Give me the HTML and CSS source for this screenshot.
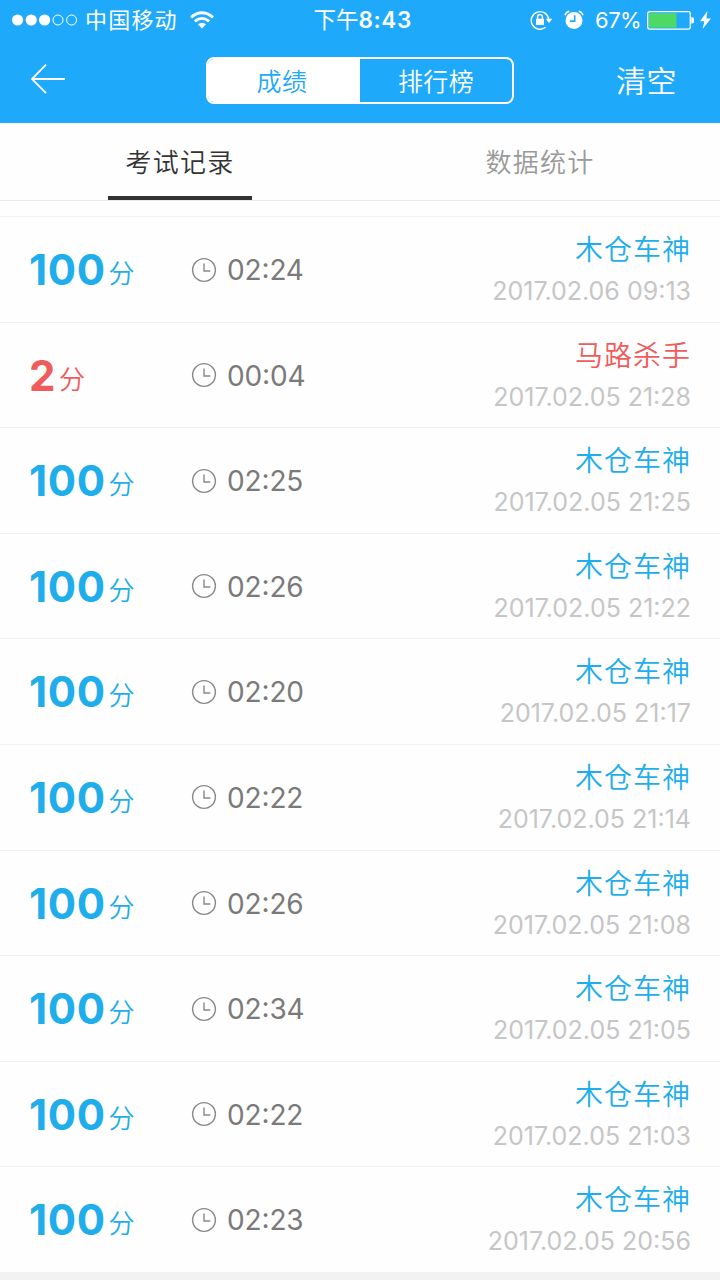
FILE: index.html
```html
<!DOCTYPE html>
<html lang="zh-CN">
<head>
<meta charset="utf-8">
<title>考试记录</title>
<link rel="stylesheet" href="styles.css">
</head>
<body>
<svg class="defs" width="0" height="0" aria-hidden="true">
  <symbol id="clock" viewBox="0 0 26 26"><circle cx="13" cy="13" r="11.4"/><path d="M13 6.5V14h6.3"/></symbol>
</svg>
<header class="header">
  <div class="status">
    <div class="status-left">
      <svg class="signal" width="66" height="12" viewBox="0 0 66 12"><g fill="#fff"><circle cx="5.6" cy="6" r="5.6"/><circle cx="19.2" cy="6" r="5.6"/><circle cx="32.6" cy="6" r="5.6"/></g><g fill="none" stroke="#fff"><circle cx="46" cy="6" r="5"/><circle cx="59.6" cy="6" r="5"/></g></svg>
      <span class="carrier">中国移动</span>
      <svg class="wifi" width="24" height="18" viewBox="0 0 24 18"><g fill="none" stroke="#fff" stroke-width="2.8"><path d="M1 6.4Q12-3 23 6.4"/><path d="M4.8 10.4Q12 4.4 19.2 10.4"/></g><path fill="#fff" d="M7.9 13.3Q12 10 16.1 13.3L12 17.6z"/></svg>
    </div>
    <div class="clock-text">下午<b>8:43</b></div>
    <div class="status-right">
      <svg class="lock" width="23" height="20" viewBox="0 0 23 20"><path fill="none" stroke="#fff" stroke-width="1.4" d="M15.6 17.3A8.8 8.8 0 1 1 18.8 9.5"/><path fill="#fff" d="M15.7 8.8h6.6L19 13z"/><rect x="6" y="8.8" width="8" height="6.2" rx=".8" fill="#fff"/><path fill="none" stroke="#fff" stroke-width="1.5" d="M7.6 9V7a2.4 2.4 0 0 1 4.8 0v2"/></svg>
      <svg class="alarm" width="20" height="20" viewBox="0 0 20 20"><circle cx="10" cy="10.6" r="8.5" fill="#fff"/><path fill="none" stroke="#fff" stroke-width="1.5" d="M1 5.2Q2 2 5.3 1.2M19 5.2Q18 2 14.7 1.2"/><path fill="none" stroke="#1fa9fb" stroke-width="1.6" d="M10.7 5.2v5.9H5.8"/></svg>
      <span class="percent">67%</span>
      <svg class="battery" width="47" height="19" viewBox="0 0 47 19"><rect x=".7" y=".7" width="42.6" height="17.4" rx="1.8" fill="none" stroke="#fff" stroke-width="1.3"/><rect x="2" y="2.2" width="27.5" height="14.4" fill="#4cd964"/><path fill="#fff" d="M44.3 6.2h1q1.7 0 1.7 1.8v2.8q0 1.8-1.7 1.8h-1z"/></svg>
      <svg class="bolt" width="11" height="18" viewBox="0 0 11 18"><path fill="#fff" d="M7.4 0L0 10.2h4.4L2.6 18 11 7.4H6.4z"/></svg>
    </div>
  </div>
  <nav class="nav">
    <svg class="back" width="36" height="32" viewBox="0 0 36 32"><path fill="none" stroke="#fff" stroke-width="1.8" d="M16 1.6L2 16l14 14.2M2 16h33"/></svg>
    <div class="segmented"><span class="segment active">成绩</span><span class="segment">排行榜</span></div>
    <span class="clear">清空</span>
  </nav>
</header>
<div class="tabs"><div class="tab selected"><span>考试记录</span></div><div class="tab"><span>数据统计</span></div></div>
<main class="records">
  <article class="record"><div class="score"><b>100</b><span>分</span></div><div class="duration"><svg><use href="#clock"/></svg><span>02<i>:</i>24</span></div><div class="result"><div class="rank">木仓车神</div><time>2017.02.06 09<i>:</i>13</time></div></article>
  <article class="record failed"><div class="score"><b>2</b><span>分</span></div><div class="duration"><svg><use href="#clock"/></svg><span>00<i>:</i>04</span></div><div class="result"><div class="rank">马路杀手</div><time>2017.02.05 21<i>:</i>28</time></div></article>
  <article class="record"><div class="score"><b>100</b><span>分</span></div><div class="duration"><svg><use href="#clock"/></svg><span>02<i>:</i>25</span></div><div class="result"><div class="rank">木仓车神</div><time>2017.02.05 21<i>:</i>25</time></div></article>
  <article class="record"><div class="score"><b>100</b><span>分</span></div><div class="duration"><svg><use href="#clock"/></svg><span>02<i>:</i>26</span></div><div class="result"><div class="rank">木仓车神</div><time>2017.02.05 21<i>:</i>22</time></div></article>
  <article class="record"><div class="score"><b>100</b><span>分</span></div><div class="duration"><svg><use href="#clock"/></svg><span>02<i>:</i>20</span></div><div class="result"><div class="rank">木仓车神</div><time>2017.02.05 21<i>:</i>17</time></div></article>
  <article class="record"><div class="score"><b>100</b><span>分</span></div><div class="duration"><svg><use href="#clock"/></svg><span>02<i>:</i>22</span></div><div class="result"><div class="rank">木仓车神</div><time>2017.02.05 21<i>:</i>14</time></div></article>
  <article class="record"><div class="score"><b>100</b><span>分</span></div><div class="duration"><svg><use href="#clock"/></svg><span>02<i>:</i>26</span></div><div class="result"><div class="rank">木仓车神</div><time>2017.02.05 21<i>:</i>08</time></div></article>
  <article class="record"><div class="score"><b>100</b><span>分</span></div><div class="duration"><svg><use href="#clock"/></svg><span>02<i>:</i>34</span></div><div class="result"><div class="rank">木仓车神</div><time>2017.02.05 21<i>:</i>05</time></div></article>
  <article class="record"><div class="score"><b>100</b><span>分</span></div><div class="duration"><svg><use href="#clock"/></svg><span>02<i>:</i>22</span></div><div class="result"><div class="rank">木仓车神</div><time>2017.02.05 21<i>:</i>03</time></div></article>
  <article class="record"><div class="score"><b>100</b><span>分</span></div><div class="duration"><svg><use href="#clock"/></svg><span>02<i>:</i>23</span></div><div class="result"><div class="rank">木仓车神</div><time>2017.02.05 20<i>:</i>56</time></div></article>
</main>
</body>
</html>
```

FILE: styles.css
```css
* { box-sizing: border-box; }
body {
  margin: 0;
  width: 720px;
  height: 1280px;
  overflow: hidden;
  background: #f2f2f2;
  font-family: Inter, "Noto Sans CJK SC", sans-serif;
}
svg { display: block; flex: none; }
.defs { position: absolute; }
.header { height: 123px; background: #1fa9fb; color: #fff; }
.status {
  display: grid;
  grid-template-columns: 1fr 100px 1fr;
  align-items: center;
  height: 40px;
  padding: 0 9px 0 12px;
}
.status-left, .status-right { display: flex; align-items: center; }
.status-right { justify-content: flex-end; }
.carrier { margin: 0 12px 0 7px; font-size: 22px; letter-spacing: 1.2px; line-height: 40px; }
.clock-text { padding-left: 2px; font-size: 22.5px; line-height: 40px; white-space: nowrap; text-align: center; }
.clock-text b { font-weight: 600; letter-spacing: .6px; }
.alarm { margin-left: 11px; }
.percent { margin: 0 6px 0 11px; font-size: 22px; line-height: 40px; letter-spacing: -.6px; }
.battery { margin-right: 6px; }
.nav {
  display: grid;
  grid-template-columns: 176px 308px 1fr;
  align-items: center;
  height: 80px;
  padding: 0 43px 0 30px;
}
.back { margin-bottom: 2px; }
.segmented {
  display: grid;
  grid-template-columns: 1fr 1fr;
  height: 47px;
  border: 2px solid #fff;
  border-radius: 8px;
  overflow: hidden;
}
.segment { text-align: center; font-size: 25px; font-weight: 350; line-height: 46px; letter-spacing: .4px; }
.segment.active { background: #fff; color: #1fa9fb; padding-right: 4px; }
.clear { margin-bottom: 2px; text-align: right; font-size: 30px; font-weight: 350; letter-spacing: .5px; }
.tabs {
  display: grid;
  grid-template-columns: 1fr 1fr;
  height: 78px;
  background: #fefefe;
  border-bottom: 1px solid #e9e9e9;
}
.tab { display: flex; justify-content: center; color: #999; font-size: 26px; font-weight: 350; letter-spacing: 1.3px; line-height: 79px; }
.tab span { width: 144px; height: 77px; text-align: center; }
.tab.selected span { color: #333; border-bottom: 4px solid #333; }
.records { height: 1071px; padding-top: 15px; background: #fefefe; }
.record {
  display: grid;
  grid-template-columns: 161px 1fr auto;
  height: 105.6px;
  padding: 0 30px;
  border-top: 1px solid #f2f2f2;
  background: #fefefe;
  color: #1faeeb;
}
.record.failed { color: #f05b5b; }
.record i { display: inline-block; font-style: normal; line-height: 1; transform: translateY(-.07em); }
.score { display: flex; margin-left: -1px; line-height: 105px; }
.score b { font-size: 42px; font-weight: 700; letter-spacing: .6px; }
.score span { margin-left: 3px; padding-top: 4px; font-size: 26px; font-weight: 350; }
.duration { display: flex; align-items: center; gap: 10px; height: 105px; color: #7a7a7a; font-size: 28px; letter-spacing: -.15px; }
.duration span { padding-top: 1px; }
.duration svg { width: 26px; height: 26px; fill: none; stroke: #888; stroke-width: 1.4; }
.result { padding-top: 12px; text-align: right; }
.rank { font-size: 28px; font-weight: 350; line-height: 42px; letter-spacing: 1px; margin-right: -1px; }
time { display: block; margin-right: -1px; color: #c6c6c6; font-size: 25px; line-height: 40px; }
```
